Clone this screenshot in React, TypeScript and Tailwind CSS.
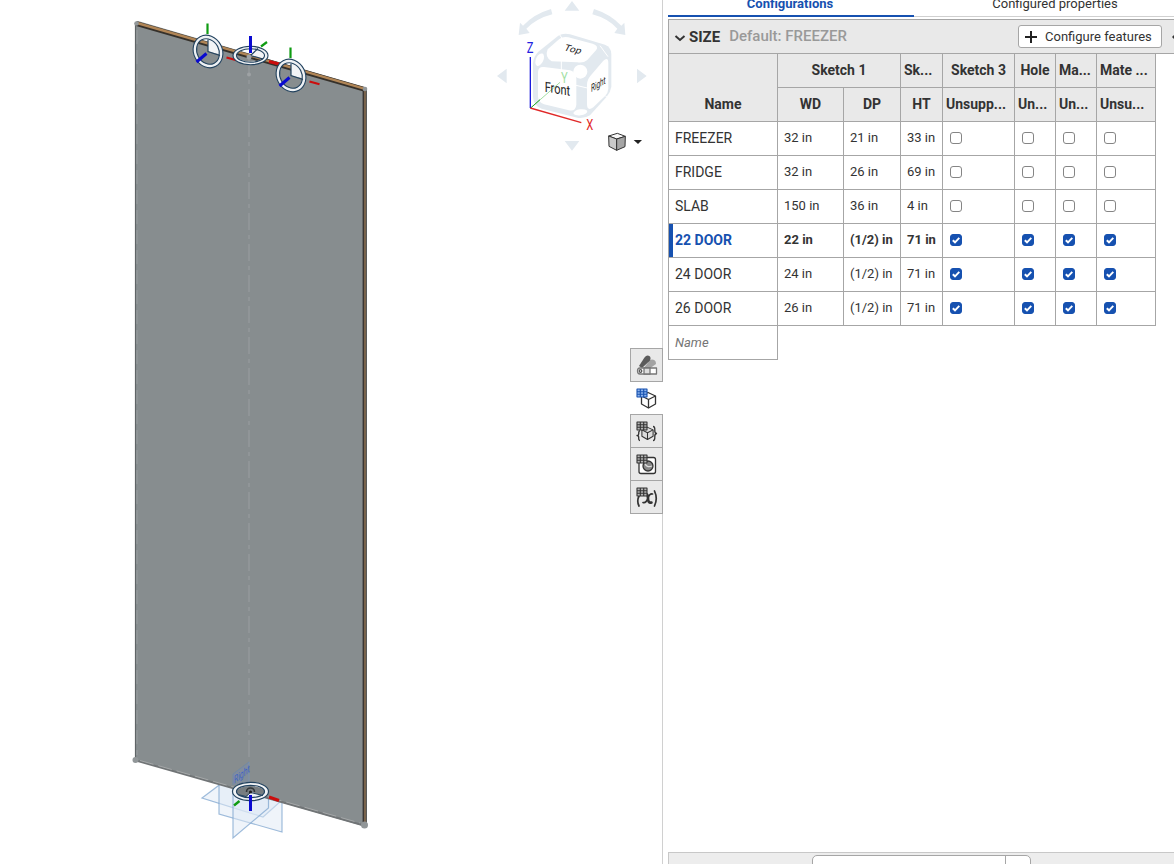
import React, { useState } from "react";

type Row = { name: string; wd: string; dp: string; ht: string; on: boolean };

const initialRows: Row[] = [
  { name: "FREEZER", wd: "32 in", dp: "21 in", ht: "33 in", on: false },
  { name: "FRIDGE", wd: "32 in", dp: "26 in", ht: "69 in", on: false },
  { name: "SLAB", wd: "150 in", dp: "36 in", ht: "4 in", on: false },
  { name: "22 DOOR", wd: "22 in", dp: "(1/2) in", ht: "71 in", on: true },
  { name: "24 DOOR", wd: "24 in", dp: "(1/2) in", ht: "71 in", on: true },
  { name: "26 DOOR", wd: "26 in", dp: "(1/2) in", ht: "71 in", on: true },
];

const flagColumns = ["Sketch 3", "Hole", "Mate 1", "Mate 2"];

/* Mate connector seen on the top edge, drawn around its own origin. */
function EdgeConnector({ x, y }: { x: number; y: number }) {
  return (
    <g transform={`translate(${x} ${y})`}>
      <path d="M0 0V-12.5A12 12 0 0 1 12.5 3Z" fill="#f2f4f6" />
      <g transform="rotate(-28)" fill="none">
        <ellipse rx="12.600" ry="15" stroke="#eef1f4" strokeWidth="3.6" />
        <ellipse rx="14.300" ry="16.800" stroke="#23435f" strokeWidth="1.1" />
        <ellipse rx="10.900" ry="13.200" stroke="#23435f" strokeWidth="1.1" />
      </g>
      <path d="M0-12V0L12 4" fill="none" stroke="#23435f" strokeWidth="1.2" />
      <path d="M-.5-28V-17.500" stroke="#0f9b12" strokeWidth="2.2" />
      <path d="M-1.500 2L-11.500 10.500" stroke="#0a0ad0" strokeWidth="3" />
      <path d="M18.500 6L28.500 8.700" stroke="#cc0d0d" strokeWidth="2.2" />
    </g>
  );
}

function Model() {
  return (
    <svg width="662" height="864" viewBox="0 0 662 864" className="block shrink-0" aria-label="Door model">
      <g stroke="#7fa6cf" strokeWidth="1.2" fill="#dfeaf5" fillOpacity=".5" strokeOpacity=".75">
        <path d="M202 798L222 783L281 801L263 817Z" />
        <path d="M219 780V814L282 832V800Z" />
        <path d="M233 780V838L268.500 808V790Z" />
      </g>
      <path d="M135 23L138 21L367 88V825L363 826L135 760Z" fill="#878d8f" />
      <path d="M136 23.500L365 89.500" stroke="#35302a" strokeWidth="4.600" />
      <path d="M137 23L365 88.800" stroke="#b08556" strokeWidth="2.400" />
      <path d="M364.600 90V825" stroke="#3a3633" strokeWidth="4" />
      <path d="M365 90V825" stroke="#9a7c5a" strokeWidth="1.300" />
      <path d="M135.500 24V760" stroke="#5f6466" strokeWidth="1.200" />
      <path d="M137 30V755" stroke="#989c9e" strokeDasharray="14 6" />
      <path d="M136 760.500L364 825.500" stroke="#707476" strokeWidth="2" />
      <path d="M140 760.500L360 823" stroke="#a4a7a8" strokeWidth="1" strokeDasharray="14 5" />
      <path d="M249 58V790" stroke="#959a9c" strokeWidth="1.400" strokeDasharray="17 5 4 5" />
      <circle cx="249" cy="74.500" r="2" fill="#9ea2a4" />
      <g fill="#919698">
        <circle cx="136.500" cy="23.500" r="2.300" />
        <circle cx="365" cy="89" r="2.300" />
        <circle cx="135.500" cy="760" r="3" />
        <circle cx="364.500" cy="825" r="3.500" />
      </g>
      <EdgeConnector x={208} y={51.5} />
      <g>
        <path d="M250.500 55.500L258 48Q267 52 264 59Z" fill="#f3f4f6" />
        <g fill="none">
          <ellipse cx="250.500" cy="55.500" rx="15.800" ry="7.700" stroke="#eef1f4" strokeWidth="3" />
          <ellipse cx="250.500" cy="55.500" rx="17.500" ry="9.300" stroke="#23435f" strokeWidth="1.100" />
          <ellipse cx="250.500" cy="55.500" rx="14" ry="6.800" stroke="#23435f" strokeWidth="1.100" />
          <path d="M258 48.500L250.500 55.500L263 59" stroke="#23435f" strokeWidth="1.200" />
        </g>
        <circle cx="249" cy="57" r="2.500" fill="#9ea2a4" />
        <path d="M250.500 36V53" stroke="#0a0ad0" strokeWidth="3" />
        <path d="M261 46.500L267 42" stroke="#0f9b12" strokeWidth="2.200" />
        <path d="M269 61.500L279 64" stroke="#cc0d0d" strokeWidth="3" />
      </g>
      <EdgeConnector x={291} y={75.5} />
      <path d="M233 785V774L249 762V785" fill="#6e8cc8" fillOpacity=".22" stroke="#6687b1" strokeOpacity=".6" />
      <text transform="matrix(.62 -.48 0 1 234 784)" fontFamily="Roboto, sans-serif" fontSize="11" fill="#3d63c6">
        Right
      </text>
      <g fill="none">
        <ellipse cx="250.500" cy="791.500" rx="16" ry="7.500" fill="#777d80" stroke="#f2f4f6" strokeWidth="4" />
        <path d="M237 794L246 797L251 792L264 796L257 799H244Z" fill="#eff3f7" />
        <ellipse cx="250.500" cy="791.500" rx="18" ry="9.200" stroke="#23435f" strokeWidth="1.200" />
        <ellipse cx="250.500" cy="791.500" rx="14" ry="6.200" stroke="#23435f" strokeWidth="1.200" />
        <path d="M238 794.500L246 796.500L250.500 792.500L263 795.500" stroke="#23435f" />
        <path d="M246.500 792A4 4 0 1 1 254.500 792" stroke="#333739" strokeWidth="1.600" />
        <circle cx="250.500" cy="792" r="1.600" fill="#222" />
        <path d="M239.500 801L234 805.500" stroke="#0f9b12" strokeWidth="2.400" />
        <path d="M269 797L279 800.500" stroke="#cc0d0d" strokeWidth="3" />
        <path d="M250.500 795V811" stroke="#0a0ad0" strokeWidth="3" />
      </g>
    </svg>
  );
}

function ViewCube() {
  return (
    <svg width="170" height="160" viewBox="0 0 510 480" className="block" fontFamily="Roboto, sans-serif" aria-label="View cube">
      <g fill="#e2e9ef">
        <path d="M224 32L246 3L268 32ZM224 423H268L246 452ZM50 206V250L21 228ZM441 206V250L470 228Z" />
        <path d="M183 27L187 43Q140 55 109 86L119 99L86 105L90 68L99 77Q132 42 183 27Z" />
        <path d="M312 27L307 43Q353 55 382 86L373 99L406 105L403 68L394 77Q360 42 312 27Z" />
        <path d="M205 107Q220 98 240 103L345 134Q364 142 364 162V260Q362 275 350 290L300 346Q285 356 265 354L155 326Q130 316 129 290V190Q130 170 145 155Z" />
      </g>
      <g fill="#fff">
        <path d="M208 117Q218 109 235 112L308 131Q328 138 318 151L292 180Q280 190 262 187L185 184Q163 172 173 148Z" />
        <path d="M162 201L240 211Q259 217 259 236V314Q257 335 237 331L162 313Q144 308 144 289V216Q145 199 162 201Z" />
        <path d="M306 222L340 182Q355 169 355 190V266Q354 278 346 287L310 322Q291 335 291 312V253Q292 236 306 222Z" />
        <circle cx="271" cy="215" r="21" />
        <ellipse cx="149" cy="179" rx="11" ry="20" transform="rotate(25 149 179)" />
        <ellipse cx="271" cy="337" rx="21" ry="9" transform="rotate(-8 271 337)" />
      </g>
      <g stroke="#fff" strokeWidth="3" fill="none">
        <path d="M214 180V212M258 256L292 264M330 137L354 170M208 103L219 119M346 288L362 298" />
      </g>
      <path d="M122 324L210 247" stroke="#a3dfa5" strokeWidth="3" />
      <path d="M122 324L150 299" stroke="#24a52a" strokeWidth="3" />
      <path d="M121 171V324" stroke="#1c1cdc" strokeWidth="4" />
      <path d="M121 324L274 368" stroke="#e02828" strokeWidth="4" />
      <g fontSize="40">
        <text transform="matrix(.84 0 0 1.1 110 158)" fill="#2020e0">Z</text>
        <text transform="matrix(.84 0 0 1.1 213 248)" fill="#a3dfa5">Y</text>
        <text transform="matrix(.84 0 0 1.1 289 390)" fill="#e02828">X</text>
      </g>
      <g fill="#222">
        <text transform="matrix(.87 .14 0 1.12 164 275)" fontSize="38">Front</text>
        <text transform="matrix(.66 -.4 0 1.12 303 277)" fontSize="29">Right</text>
        <text transform="matrix(.9 .2 -.4 .76 220 151)" fontSize="33">Top</text>
      </g>
      <g stroke="#333" strokeWidth="3" strokeLinejoin="round">
        <path d="M356 408L382 400L406 409L380 417Z" fill="#f8f8f8" />
        <path d="M356 408L380 417V451L357 439Z" fill="#c9c9c9" />
        <path d="M406 409L380 417V451L405 440Z" fill="#a5a5a5" />
      </g>
      <path d="M431 420H456L444 432Z" fill="#222" />
    </svg>
  );
}

function MiniGrid({ blue = false }: { blue?: boolean }) {
  return (
    <g>
      <path d="M1 1H11V9H1Z" fill={blue ? "#8eb4ed" : "#b5b5b5"} />
      <path d="M.7 1H11.300M.7 3.700H11.300M.7 6.300H11.300M.7 9H11.300M1 1V9M4.300 1V9M7.700 1V9M11 1V9" stroke={blue ? "#1651b0" : "#333"} strokeWidth="1.100" />
    </g>
  );
}

function ToolIcon({ kind }: { kind: number }) {
  return (
    <svg width="22" height="22" viewBox={kind > 0 ? "0 -1 22 22" : "0 0 22 22"} fill="none" stroke="#333" strokeWidth="1.300" strokeLinejoin="round">
      {kind === 0 && (
        <g stroke="none">
          <path d="M14 6A4 4 0 0 1 20 10L13 15H7Z" fill="#a3a3a3" />
          <path d="M3 12L8.500 3.500Q11 0 14 2.500Q15.500 5 13 7.500L6 14Z" fill="#5b5b5b" />
          <path d="M4 14H20.500V20H4Q1.500 20 1.500 17T4 14Z" fill="#fff" stroke="#777" />
          <path d="M8 14H14V20H8Z" fill="#ddd" stroke="#777" />
          <circle cx="4.500" cy="17" r="1.300" fill="#fff" stroke="#555" />
        </g>
      )}
      {(kind === 1 || kind === 2) && (
        <g transform={kind === 2 ? "translate(1.500 2.500) scale(.8)" : undefined}>
          <path d="M12 4.500L19.500 8V16L12.500 20L5.500 16V8Z" fill={kind === 1 ? "#fff" : "#ddd"} />
          <path d="M5.500 8L12.500 11.500L19.500 8M12.500 11.500V20" />
        </g>
      )}
      {kind === 2 && <path d="M4 9.500Q2.500 10 2.700 13Q2.700 14.500 1 14.500Q2.700 14.500 2.700 16.500Q2.500 19.500 4 19.500M17 5.500Q19 5.500 18.800 9Q18.500 12 20.500 12.500Q18.500 13 18.800 16Q19 19.500 17 19.500" />}
      {kind === 3 && (
        <g>
          <rect x="3" y="3.500" width="16.500" height="16" rx="2" fill="#fff" />
          <circle cx="12" cy="12" r="5" fill="#888" />
          <path d="M9 9.500Q10.500 14 16 12" stroke="#ddd" />
        </g>
      )}
      {kind === 4 && (
        <g strokeLinecap="round">
          <path d="M3 9Q.5 14 3 19M18.500 4Q22 11.500 18.500 19" strokeWidth="1.700" />
          <path d="M9.500 7Q12 7 12 11Q12 16.500 15.500 15.500" strokeWidth="2.600" />
          <path d="M16.500 7Q13.500 6.500 12 11Q10 16.500 7 15.500" strokeWidth="1.700" />
        </g>
      )}
      <g stroke="none">{kind > 0 && <MiniGrid blue={kind === 1} />}</g>
    </svg>
  );
}

function Check({ label, checked }: { label: string; checked: boolean }) {
  const [on, setOn] = useState(checked);
  return (
    <label className="grid w-3 grid-cols-1">
      <input
        type="checkbox"
        aria-label={label}
        checked={on}
        onChange={() => setOn(!on)}
        className="col-start-1 row-start-1 size-3 appearance-none rounded-[3px] border border-[#858585] bg-white checked:border-[#1651b0] checked:bg-[#1651b0]"
      />
      {on && (
        <svg viewBox="0 0 12 12" className="pointer-events-none col-start-1 row-start-1 size-3">
          <path d="M2.800 6.200L5 8.300L9.300 3.800" fill="none" stroke="#fff" strokeWidth="1.900" />
        </svg>
      )}
    </label>
  );
}

const headBase = "h-[34px] border-r border-b border-[#a6a6a6] bg-[#e9e9e9] px-0 pt-0 font-bold whitespace-nowrap overflow-hidden";
const head = headBase + " pb-0.5";
const headLeft = head + " pl-[3px] text-left";
const cellBase = "h-[34px] border-r border-b border-[#a6a6a6] pt-0 pr-0 pb-0.5 whitespace-nowrap";
const cell = cellBase + " pl-[6px]";
const valueCell = cell + " text-[13px]";

function ConfigTable() {
  return (
    <table className="w-[488px] table-fixed border-separate border-spacing-0 border-l border-[#a6a6a6] text-sm leading-5">
      <colgroup>
        <col className="w-[109px]" />
        <col className="w-[66px]" />
        <col className="w-[57px]" />
        <col className="w-[42px]" />
        <col className="w-[72px]" />
        <col className="w-[41px]" />
        <col className="w-[41px]" />
        <col className="w-[59px]" />
      </colgroup>
      <thead>
        <tr>
          <th rowSpan={2} className={headBase + " pb-[7px] align-bottom"}>Name</th>
          <th colSpan={2} className={head}>Sketch 1</th>
          <th className={headLeft}>Sk...</th>
          <th className={head}>Sketch 3</th>
          <th className={head}>Hole</th>
          <th className={headLeft}>Ma...</th>
          <th className={headLeft}>Mate ...</th>
        </tr>
        <tr>
          <th className={head}>WD</th>
          <th className={head}>DP</th>
          <th className={head}>HT</th>
          <th className={headLeft}>Unsupp...</th>
          <th className={headLeft}>Un...</th>
          <th className={headLeft}>Un...</th>
          <th className={headLeft}>Unsu...</th>
        </tr>
      </thead>
      <tbody>
        {initialRows.map((r) => {
          const active = r.name === "22 DOOR";
          return (
            <tr key={r.name} className={active ? "font-bold" : ""}>
              <td className={cell + (active ? " text-[#1651b0] shadow-[inset_4px_0_0_#1651b0]" : "")}>{r.name}</td>
              <td className={valueCell}>{r.wd}</td>
              <td className={valueCell}>{r.dp}</td>
              <td className={valueCell}>{r.ht}</td>
              {flagColumns.map((c) => (
                <td key={c} className={cellBase + " pl-[7px]"}>
                  <Check label={r.name + " " + c} checked={r.on} />
                </td>
              ))}
            </tr>
          );
        })}
        <tr>
          <td className="h-[34px] border-r border-b border-[#a6a6a6] py-0 pr-0 pl-[6px]">
            <input aria-label="Name" placeholder="Name" className="block w-24 text-[13px] italic outline-none placeholder:text-[#757575]" />
          </td>
        </tr>
      </tbody>
    </table>
  );
}

const tools = ["Appearances", "Configurations", "Configured parts", "Configured appearances", "Variables"];

export default function App() {
  return (
    <div className="flex h-screen overflow-hidden bg-white font-[Roboto,sans-serif] text-[#333]">
      <main className="relative min-w-0 flex-1">
        <Model />
        <div className="absolute top-0 right-0.5">
          <ViewCube />
        </div>
        <nav className="absolute top-[348px] -right-px z-10 flex flex-col border-t border-[#a6a6a6]">
          {tools.map((t, i) => (
            <button
              key={t}
              aria-label={t}
              className={
                "grid h-[33px] w-[33px] place-items-center border-b border-[#a6a6a6] " +
                (i === 1 ? "bg-white" : "border-x bg-[#e9e9e9]")
              }
            >
              <ToolIcon kind={i} />
            </button>
          ))}
        </nav>
      </main>

      <aside className="flex w-[512px] shrink-0 flex-col border-l border-[#d0d0d0] pl-[5px]">
        <div className="flex h-[17px] items-end text-[13px] leading-4">
          <button className="w-[246px] border-b-2 border-[#1651b0] pr-[2px] pb-[3px] font-bold text-[#1651b0]">Configurations</button>
          <button className="flex-1 border-b border-[#d0d0d0] pb-1 pl-[22px] whitespace-nowrap">Configured properties</button>
        </div>
        <section className="mt-0.5">
          <header className="flex h-[35px] items-center overflow-hidden border border-r-0 border-[#a6a6a6] bg-[#e9e9e9]">
            <button aria-label="Collapse SIZE" className="ml-[5px]">
              <svg width="12" height="12" viewBox="0 0 12 12" fill="none" stroke="#333" strokeWidth="2">
                <path d="M1.500 5L6 9L10.500 5" />
              </svg>
            </button>
            <h2 className="ml-[3px] pt-0.5 text-[15px] font-bold">SIZE</h2>
            <span className="ml-[9px] text-[15px] font-medium text-[#999]">Default: FREEZER</span>
            <button className="ml-auto flex h-[23px] w-[144px] shrink-0 items-center gap-2 rounded-[3px] border border-[#a6a6a6] bg-white pl-[6px] text-[13px] whitespace-nowrap">
              <svg width="12" height="12" viewBox="0 0 12 12" stroke="#222" strokeWidth="2">
                <path d="M6 0V12M0 6H12" />
              </svg>
              Configure features
            </button>
            <svg width="12" height="6" viewBox="0 0 12 6" fill="#333">
              <path d="M10 3L12 1V5Z" />
            </svg>
          </header>
          <ConfigTable />
        </section>
        <footer className="mt-auto flex h-3 shrink-0 justify-center overflow-hidden border-t border-l border-[#c8c8c8] bg-[#ededed] pt-0.5">
          <div className="flex h-6 w-[219px] rounded-[5px] border border-[#a6a6a6] bg-white">
            <input aria-label="Search" className="min-w-0 flex-1 border-r border-[#a6a6a6] bg-transparent outline-none" />
            <button aria-label="Search options" className="w-6" />
          </div>
        </footer>
      </aside>
    </div>
  );
}
